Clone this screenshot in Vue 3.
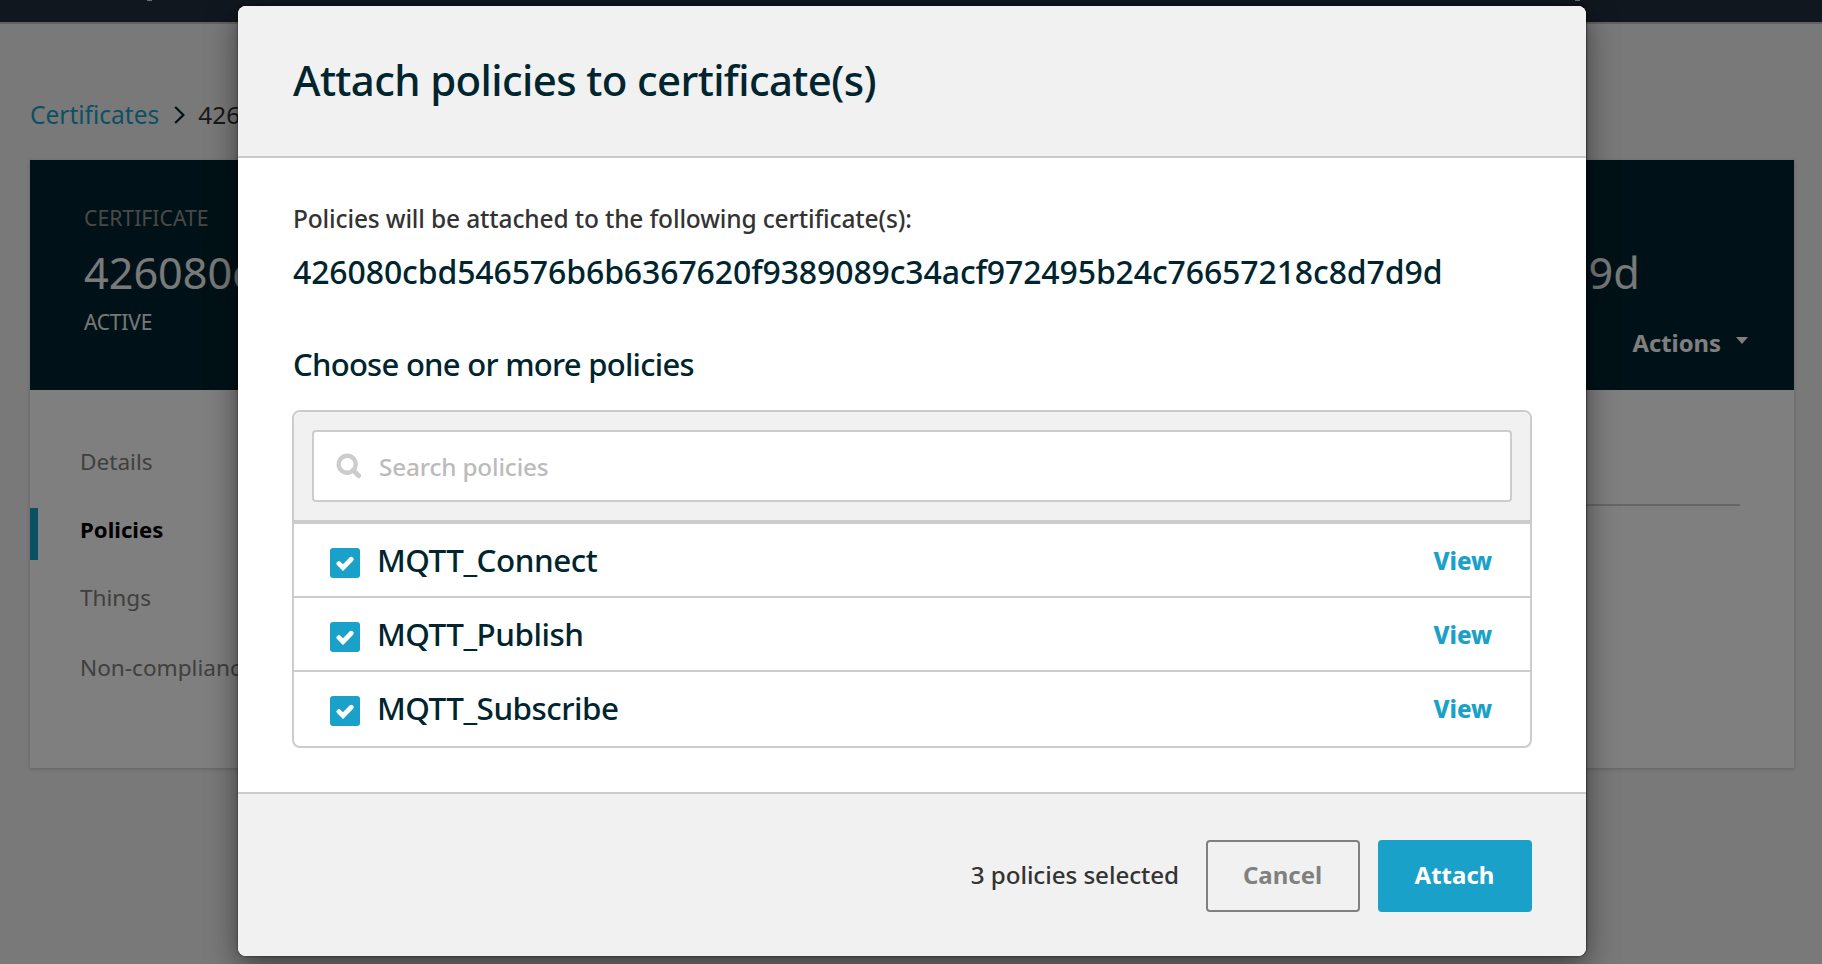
<script setup>
import { ref, computed } from 'vue'

const certificateId = '426080cbd546576b6b6367620f9389089c34acf972495b24c76657218c8d7d9d'
const tabs = ['Details', 'Policies', 'Things', 'Non-compliance']
const activeTab = ref('Policies')
const search = ref('')
const policies = ref([
  { name: 'MQTT_Connect', selected: true },
  { name: 'MQTT_Publish', selected: true },
  { name: 'MQTT_Subscribe', selected: true },
])
const visible = computed(() =>
  policies.value.filter((p) => p.name.toLowerCase().includes(search.value.toLowerCase())),
)
const selectedCount = computed(() => policies.value.filter((p) => p.selected).length)
</script>

<template>
  <div class="screen">
    <div class="page">
      <header class="topbar">
        <i class="speck speck-a"></i>
        <i class="speck speck-b"></i>
      </header>

      <nav class="crumbs">
        <a class="crumb-link">Certificates</a>
        <svg class="chevron" width="12" height="18" viewBox="0 0 12 18">
          <path d="M1.2 1 L9.4 9 L1.2 17" fill="none" stroke="currentColor" stroke-width="2.2" />
        </svg>
        <span class="crumb-id">{{ certificateId }}</span>
      </nav>

      <section class="card">
        <div class="card-head">
          <div class="kind">CERTIFICATE</div>
          <div class="cert-id">{{ certificateId }}</div>
          <div class="status-row">
            <span class="status">ACTIVE</span>
            <span class="actions">Actions<i class="caret"></i></span>
          </div>
        </div>
        <div class="card-body">
          <ul class="tabs">
            <li
              v-for="tab in tabs"
              :key="tab"
              class="tab"
              :class="{ active: tab === activeTab }"
              @click="activeTab = tab"
            >{{ tab }}</li>
          </ul>
          <div class="pane"></div>
        </div>
      </section>
    </div>

    <div class="backdrop">
      <div class="modal" role="dialog">
        <div class="modal-head"><h2 class="title">Attach policies to certificate(s)</h2></div>

        <div class="modal-body">
          <p class="intro">Policies will be attached to the following certificate(s):</p>
          <p class="target">{{ certificateId }}</p>
          <h3 class="choose">Choose one or more policies</h3>

          <div class="picker">
            <div class="search-strip">
              <label class="search">
                <svg class="lens" width="26" height="26" viewBox="0 0 26 26">
                  <circle cx="11.2" cy="11.2" r="8.5" fill="none" stroke="#ccc" stroke-width="4.4" />
                  <path d="M17.2 17.2 L22.7 22.7" stroke="#ccc" stroke-width="4.8" stroke-linecap="round" />
                </svg>
                <input v-model="search" class="search-input" type="text" placeholder="Search policies" />
              </label>
            </div>
            <div v-for="p in visible" :key="p.name" class="row" @click="p.selected = !p.selected">
              <span class="check" :class="{ off: !p.selected }">
                <svg width="18" height="16" viewBox="0 0 18 16">
                  <path
                    d="M2.9 8.6 L7 12.7 L15.2 4.3"
                    fill="none"
                    stroke="#fff"
                    stroke-width="4.8"
                    stroke-linecap="round"
                  />
                </svg>
              </span>
              <span class="name">{{ p.name }}</span>
              <a class="view">View</a>
            </div>
          </div>
        </div>

        <div class="modal-foot">
          <span class="count">{{ selectedCount }} policies selected</span>
          <button class="btn cancel">Cancel</button>
          <button class="btn attach">Attach</button>
        </div>
      </div>
    </div>
  </div>
</template>

<style>
html,
body {
  margin: 0;
  overflow: hidden;
}
</style>

<style scoped>
.screen {
  position: relative;
  width: 1822px;
  height: 964px;
  overflow: hidden;
  font-family: 'Noto Sans', 'Open Sans', sans-serif;
}
.screen * {
  box-sizing: border-box;
}
.page {
  height: 964px;
  background: #f2f2f2;
}
.topbar {
  position: relative;
  height: 24px;
  background: #232f3e;
  border-bottom: 2px solid #c4c4c4;
}
.speck {
  position: absolute;
  top: 0;
  width: 5px;
  height: 1px;
  background: #ddd;
}
.speck-a {
  left: 147px;
}
.speck-b {
  left: 1575px;
}
.crumbs {
  display: flex;
  align-items: flex-start;
  height: 136px;
  padding: 74px 0 0 30px;
  font-size: 24.5px;
  line-height: 34px;
  white-space: nowrap;
  overflow: hidden;
}
.crumb-link {
  color: #1aa1c9;
}
.chevron {
  flex: none;
  margin: 8px 12px 0 15px;
  color: #00252e;
}
.crumb-id {
  font-size: 24.4px;
  color: #333;
}
.card {
  display: flex;
  flex-direction: column;
  width: 1764px;
  height: 608px;
  margin: 0 0 0 30px;
  background: #fff;
  box-shadow: 0 1px 4px rgba(0, 0, 0, 0.2);
}
.card-head {
  height: 230px;
  padding: 43px 46px 0 54px;
  background: #00252e;
  color: #fff;
}
.kind {
  font-size: 21.2px;
  line-height: 30px;
  color: #919191;
}
.cert-id {
  margin-top: 10px;
  font-size: 43.2px;
  line-height: 60px;
  white-space: nowrap;
  color: #f2f2f2;
}
.status-row {
  display: flex;
  justify-content: space-between;
  margin-top: 4px;
}
.status {
  font-size: 21px;
  line-height: 30px;
  color: #eee;
  letter-spacing: -0.2px;
}
.actions {
  display: flex;
  align-items: center;
  height: 34px;
  margin-top: 19px;
  font-size: 23.8px;
  font-weight: 700;
}
.caret {
  margin: -5px 0 0 15px;
  border: 6.5px solid transparent;
  border-top: 7.5px solid #fff;
  border-bottom: 0;
}
.card-body {
  display: flex;
  flex: 1;
  gap: 30px;
}
.tabs {
  width: 420px;
  margin: 0;
  padding: 38px 0 0;
  list-style: none;
}
.tab {
  position: relative;
  height: 68px;
  padding-left: 50px;
  font-size: 22.6px;
  line-height: 68px;
  color: #808080;
}
.tab:last-child {
  height: 70px;
  line-height: 72px;
}
.tab.active {
  font-size: 22.2px;
  font-weight: 700;
  color: #000;
}
.tab.active::before {
  content: '';
  position: absolute;
  left: 0;
  top: 12px;
  width: 8px;
  height: 52px;
  background: #1aa1c9;
}
.pane {
  flex: 1;
  height: 116px;
  margin-right: 54px;
  border-bottom: 2px solid #ccc;
}

.backdrop {
  position: absolute;
  inset: 0;
  padding: 6px 0 0 238px;
  background: rgba(0, 0, 0, 0.5);
}
.modal {
  display: flex;
  flex-direction: column;
  width: 1348px;
  height: 950px;
  border-radius: 8px;
  background: #fff;
  box-shadow: 0 0 3px rgba(0, 0, 0, 0.5), 1px 0 1px rgba(0, 0, 0, 0.25), 0 10px 30px rgba(0, 0, 0, 0.5);
  color: #00252e;
}
.modal-head {
  height: 152px;
  padding: 44px 54px 0 55px;
  border-bottom: 2px solid #ccc;
  border-radius: 8px 8px 0 0;
  background: #f1f1f1;
}
.title {
  margin: 0;
  font-size: 42px;
  font-weight: 500;
  line-height: 60px;
  letter-spacing: -0.63px;
}
.modal-body {
  flex: 1;
  padding: 44px 54px 0;
}
.intro {
  margin: 0 0 0 1px;
  font-size: 24.5px;
  font-weight: 500;
  line-height: 34px;
  letter-spacing: -0.15px;
  color: #333;
}
.target {
  margin: 15px 0 0 1px;
  font-size: 32px;
  font-weight: 500;
  line-height: 42px;
  letter-spacing: -0.12px;
  white-space: nowrap;
}
.choose {
  margin: 50px 0 0 1px;
  font-size: 31px;
  font-weight: 500;
  line-height: 42px;
  letter-spacing: -0.72px;
}
.picker {
  margin-top: 25px;
  height: 338px;
  border: 2px solid #ccc;
  border-radius: 8px;
  overflow: hidden;
}
.search-strip {
  height: 112px;
  padding: 18px;
  border-bottom: 4px solid #ccc;
  background: #f1f1f1;
}
.search {
  display: flex;
  align-items: center;
  height: 72px;
  padding: 0 20px 0 22px;
  border: 2px solid #ccc;
  border-radius: 4px;
  background: #fff;
}
.lens {
  flex: none;
  margin: 0 17px 0 0;
}
.search-input {
  flex: 1;
  padding: 0;
  border: 0;
  outline: 0;
  background: transparent;
  font: 500 24.3px 'Noto Sans', sans-serif;
  letter-spacing: -0.15px;
  color: #333;
}
.search-input::placeholder {
  color: #bbb;
  opacity: 1;
}
.row {
  display: flex;
  align-items: center;
  height: 74px;
  padding: 0 38px 0 36px;
  border-bottom: 2px solid #ccc;
}
.row:last-child {
  border-bottom-color: transparent;
}
.check {
  display: flex;
  align-items: center;
  justify-content: center;
  width: 30px;
  height: 30px;
  margin: 6px 17px 0 0;
  border-radius: 3px;
  background: #1aa1c9;
}
.check.off {
  background: #fff;
  box-shadow: inset 0 0 0 2px #ccc;
}
.name {
  flex: 1;
  font-size: 31.4px;
  font-weight: 500;
  line-height: 42px;
  letter-spacing: -0.48px;
}
.view {
  margin-top: 2px;
  font-size: 24px;
  font-weight: 800;
  line-height: 34px;
  letter-spacing: -0.1px;
  color: #1aa1c9;
}
.modal-foot {
  display: flex;
  align-items: flex-start;
  height: 164px;
  padding: 46px 54px 0;
  border-top: 2px solid #ccc;
  border-radius: 0 0 8px 8px;
  background: #f1f1f1;
}
.count {
  margin-left: auto;
  margin-right: 27px;
  font-size: 24.2px;
  font-weight: 500;
  line-height: 70px;
  letter-spacing: -0.06px;
  color: #333;
}
.btn {
  width: 154px;
  height: 72px;
  padding: 0 1px 4px 0;
  border: 2px solid #808080;
  border-radius: 4px;
  background: transparent;
  font: 700 24px 'Noto Sans', sans-serif;
  color: #808080;
}
.attach {
  margin-left: 18px;
  border-color: #1aa1c9;
  background: #1aa1c9;
  color: #fff;
}
</style>
